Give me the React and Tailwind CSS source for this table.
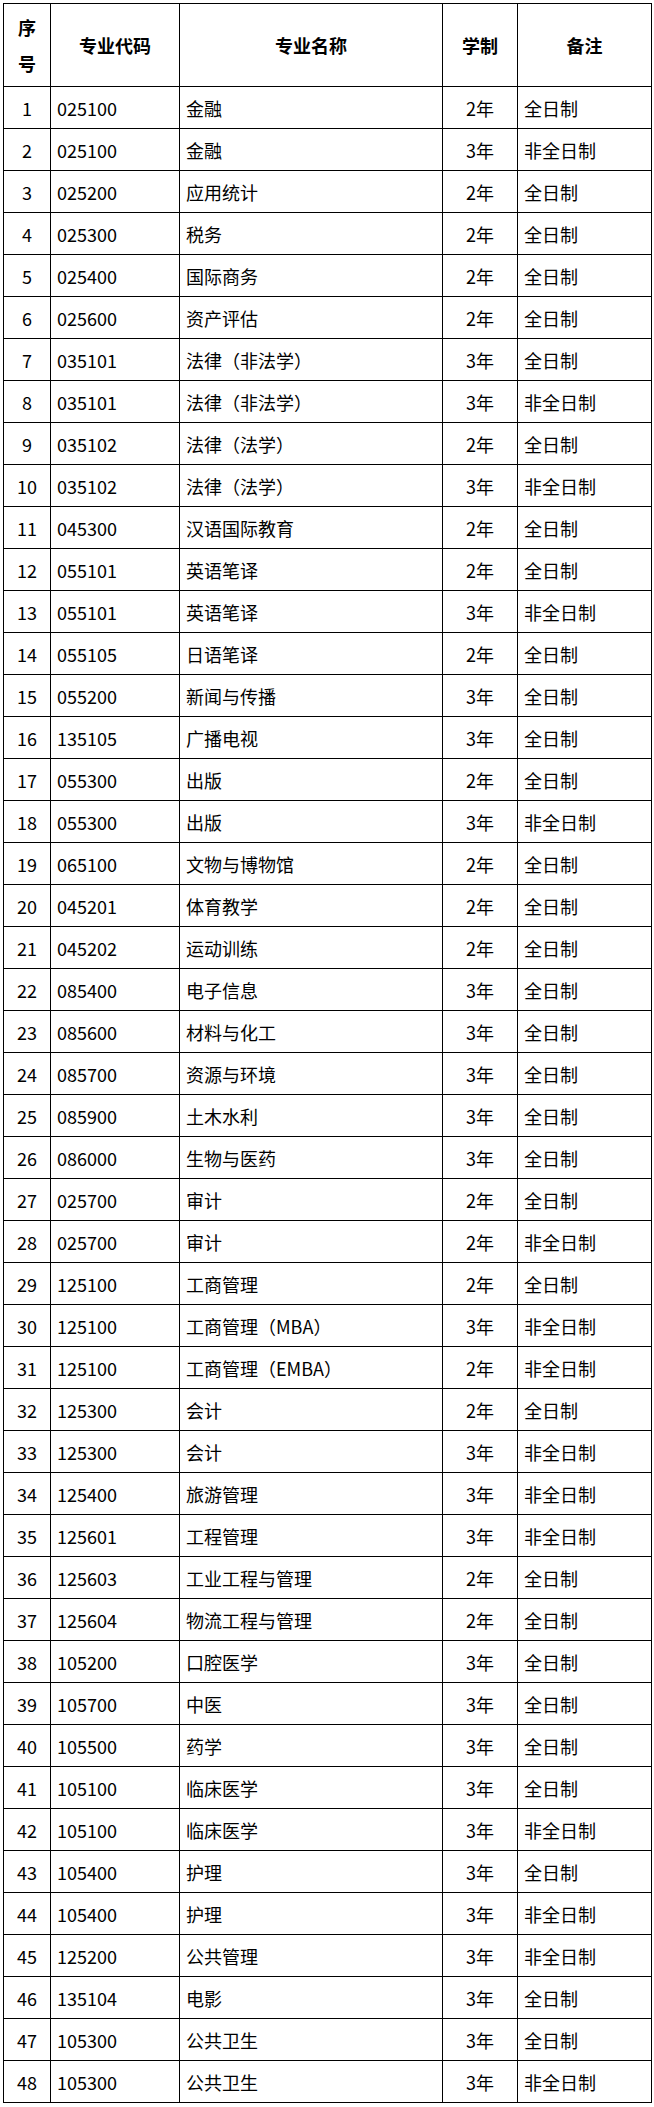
import React from "react";

// 专业列表: [序号, 代码, 名称, 学制, 备注]
const rows = [
  ["025100", "金融", "2年", "全日制"],
  ["025100", "金融", "3年", "非全日制"],
  ["025200", "应用统计", "2年", "全日制"],
  ["025300", "税务", "2年", "全日制"],
  ["025400", "国际商务", "2年", "全日制"],
  ["025600", "资产评估", "2年", "全日制"],
  ["035101", "法律（非法学）", "3年", "全日制"],
  ["035101", "法律（非法学）", "3年", "非全日制"],
  ["035102", "法律（法学）", "2年", "全日制"],
  ["035102", "法律（法学）", "3年", "非全日制"],
  ["045300", "汉语国际教育", "2年", "全日制"],
  ["055101", "英语笔译", "2年", "全日制"],
  ["055101", "英语笔译", "3年", "非全日制"],
  ["055105", "日语笔译", "2年", "全日制"],
  ["055200", "新闻与传播", "3年", "全日制"],
  ["135105", "广播电视", "3年", "全日制"],
  ["055300", "出版", "2年", "全日制"],
  ["055300", "出版", "3年", "非全日制"],
  ["065100", "文物与博物馆", "2年", "全日制"],
  ["045201", "体育教学", "2年", "全日制"],
  ["045202", "运动训练", "2年", "全日制"],
  ["085400", "电子信息", "3年", "全日制"],
  ["085600", "材料与化工", "3年", "全日制"],
  ["085700", "资源与环境", "3年", "全日制"],
  ["085900", "土木水利", "3年", "全日制"],
  ["086000", "生物与医药", "3年", "全日制"],
  ["025700", "审计", "2年", "全日制"],
  ["025700", "审计", "2年", "非全日制"],
  ["125100", "工商管理", "2年", "全日制"],
  ["125100", "工商管理（MBA）", "3年", "非全日制"],
  ["125100", "工商管理（EMBA）", "2年", "非全日制"],
  ["125300", "会计", "2年", "全日制"],
  ["125300", "会计", "3年", "非全日制"],
  ["125400", "旅游管理", "3年", "非全日制"],
  ["125601", "工程管理", "3年", "非全日制"],
  ["125603", "工业工程与管理", "2年", "全日制"],
  ["125604", "物流工程与管理", "2年", "全日制"],
  ["105200", "口腔医学", "3年", "全日制"],
  ["105700", "中医", "3年", "全日制"],
  ["105500", "药学", "3年", "全日制"],
  ["105100", "临床医学", "3年", "全日制"],
  ["105100", "临床医学", "3年", "非全日制"],
  ["105400", "护理", "3年", "全日制"],
  ["105400", "护理", "3年", "非全日制"],
  ["125200", "公共管理", "3年", "非全日制"],
  ["135104", "电影", "3年", "全日制"],
  ["105300", "公共卫生", "3年", "全日制"],
  ["105300", "公共卫生", "3年", "非全日制"],
];

const cell = "border border-black p-0 align-middle";

export default function App() {
  return (
    <div
      className="w-[654px] min-h-[2107px] bg-white text-black pt-[3px] pl-[3px]"
      style={{ fontFamily: '"Noto Sans CJK SC", "Noto Sans", sans-serif' }}
    >
      <table className="w-[648px] table-fixed border-collapse text-[18px] leading-[36px]">
        <colgroup>
          <col className="w-[47px]" />
          <col className="w-[129px]" />
          <col className="w-[263px]" />
          <col className="w-[75px]" />
          <col className="w-[134px]" />
        </colgroup>
        <thead>
          <tr className="h-[83px] font-bold">
            <th className={cell + " text-center"}>
              序<br />号
            </th>
            <th className={cell + " text-center"}>专业代码</th>
            <th className={cell + " text-center"}>专业名称</th>
            <th className={cell + " text-center"}>学制</th>
            <th className={cell + " text-center"}>备注</th>
          </tr>
        </thead>
        <tbody>
          {rows.map((r, i) => (
            <tr key={i} className="h-[42px]">
              <td className={cell + " text-center"}>{i + 1}</td>
              <td className={cell + " pl-[6px]"}>{r[0]}</td>
              <td className={cell + " pl-[6px]"}>{r[1]}</td>
              <td className={cell + " text-center"}>{r[2]}</td>
              <td className={cell + " pl-[6px]"}>{r[3]}</td>
            </tr>
          ))}
        </tbody>
      </table>
    </div>
  );
}
